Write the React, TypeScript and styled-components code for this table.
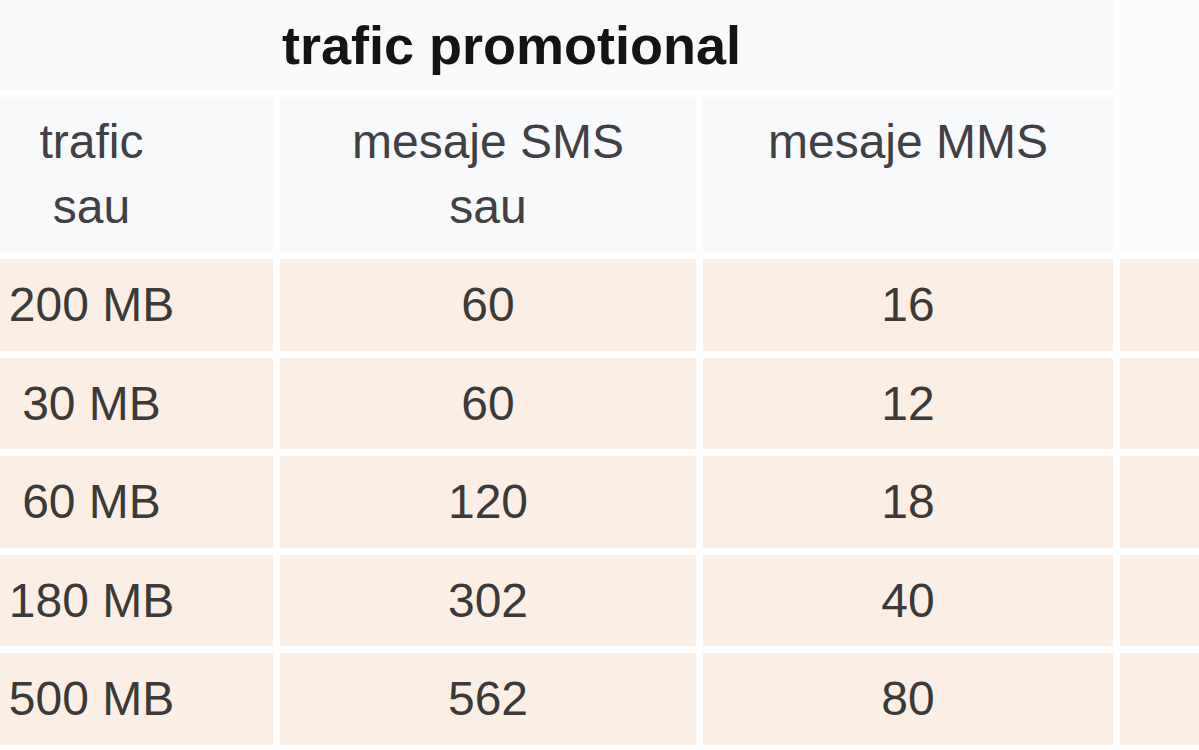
import React from "react";
import styled, { createGlobalStyle } from "styled-components";

const GlobalStyle = createGlobalStyle`
  html, body {
    margin: 0;
    padding: 0;
    background: #ffffff;
  }
  body {
    font-family: "Liberation Sans", Arial, sans-serif;
  }
`;

const Viewport = styled.div`
  width: 1199px;
  height: 750px;
  overflow: hidden;
`;

const Table = styled.div`
  display: grid;
  grid-template-columns: 363px 416px 410px 200px;
  grid-template-rows: 90px 155px repeat(5, 91.5px);
  gap: 7px 7px;
  margin-left: -90px;
  width: max-content;
`;

const TitleCell = styled.div`
  grid-column: 1 / span 3;
  background: #f8f9fa;
  display: flex;
  align-items: center;
  justify-content: center;
  font-size: 54px;
  font-weight: 700;
  color: #141414;
`;

const SideCell = styled.div`
  grid-column: 4;
  grid-row: 1 / span 2;
  background: #fbfbfc;
`;

const HeadCell = styled.div`
  background: #f8f9fa;
  padding-top: 12px;
  text-align: center;
  font-size: 48px;
  line-height: 65px;
  color: #404045;
`;

const DataCell = styled.div`
  background: #fbefe5;
  display: flex;
  align-items: center;
  justify-content: center;
  font-size: 48px;
  color: #3c3a38;
`;

const rows: [string, string, string][] = [
  ["200 MB", "60", "16"],
  ["30 MB", "60", "12"],
  ["60 MB", "120", "18"],
  ["180 MB", "302", "40"],
  ["500 MB", "562", "80"],
];

export default function App() {
  return (
    <>
      <GlobalStyle />
      <Viewport>
        <Table>
          <TitleCell>trafic promotional</TitleCell>
          <SideCell />
          <HeadCell>
            trafic
            <br />
            sau
          </HeadCell>
          <HeadCell>
            mesaje SMS
            <br />
            sau
          </HeadCell>
          <HeadCell>mesaje MMS</HeadCell>
          {rows.map((r, i) => (
            <React.Fragment key={i}>
              <DataCell>{r[0]}</DataCell>
              <DataCell>{r[1]}</DataCell>
              <DataCell>{r[2]}</DataCell>
              <DataCell />
            </React.Fragment>
          ))}
        </Table>
      </Viewport>
    </>
  );
}
